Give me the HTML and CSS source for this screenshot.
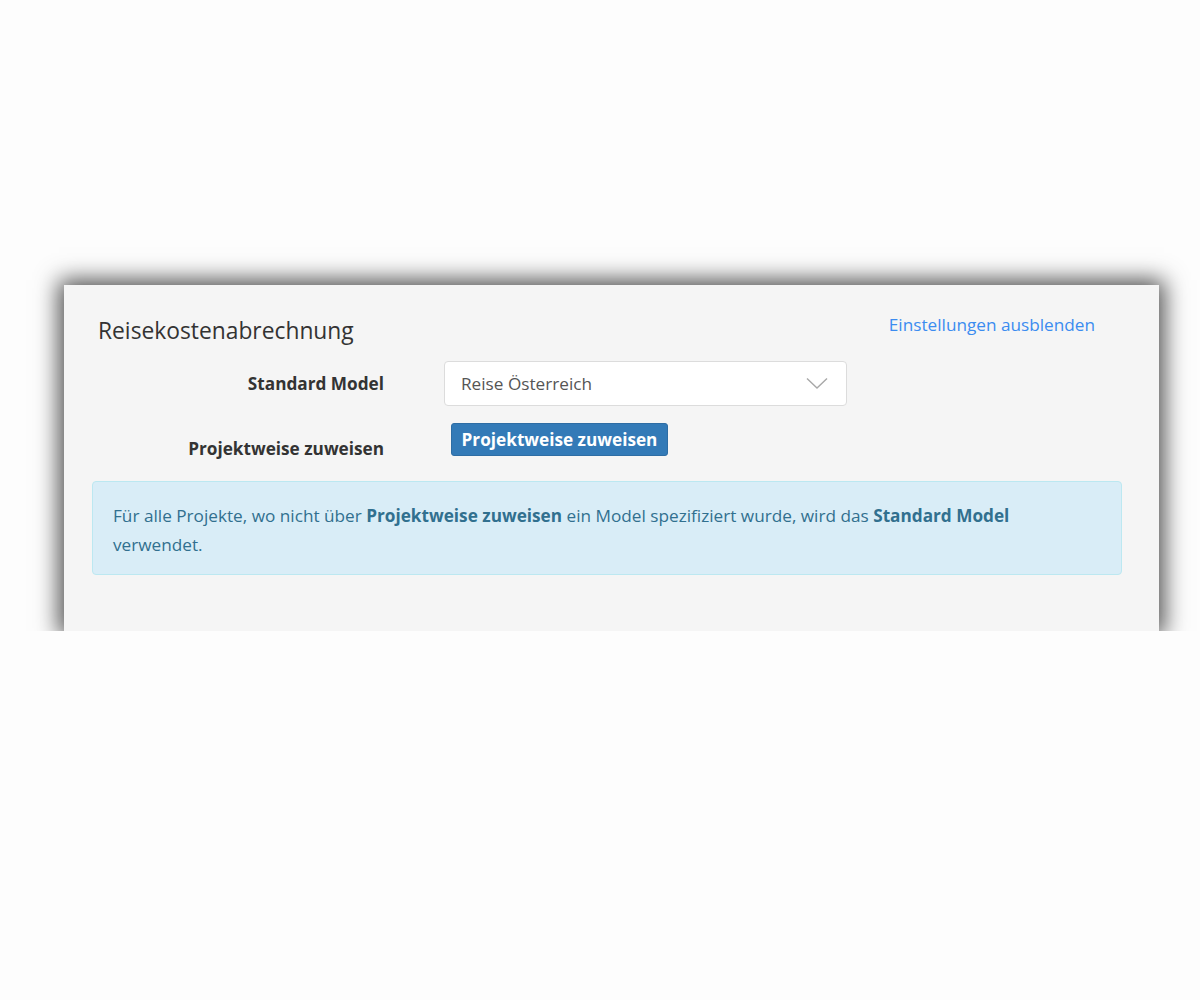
FILE: index.html
```html
<!DOCTYPE html>
<html lang="de">
  <head>
    <meta charset="UTF-8" />
    <meta name="viewport" content="width=device-width, initial-scale=1.0" />
    <title>Reisekostenabrechnung</title>
    <link rel="stylesheet" href="styles.css">
  </head>
  <body>
    <div class="panel">
      <div class="panel-head">
        <h2>Reisekostenabrechnung</h2>
        <a href="#" class="toggle">Einstellungen ausblenden</a>
      </div>
      <div class="form-row">
        <label class="form-label" for="modelSelect">Standard Model</label>
        <div class="select">
          <span>Reise Österreich</span>
          <svg width="22" height="13" viewBox="0 0 22 13">
            <polyline points="1,1.5 11,11 21,1.5" fill="none" stroke="#a8a8a8" stroke-width="1.4" />
          </svg>
        </div>
      </div>
      <div class="form-row top">
        <label class="form-label">Projektweise zuweisen</label>
        <button type="button" class="btn-primary">Projektweise zuweisen</button>
      </div>
      <div class="alert-info">
        Für alle Projekte, wo nicht über <b>Projektweise zuweisen</b> ein Model spezifiziert wurde, wird das <b>Standard Model</b> verwendet.
      </div>
    </div>
  </body>
</html>
```

FILE: styles.css
```css
* {
  box-sizing: border-box;
}
body {
  margin: 0;
  background-color: #fdfdfd;
  font-family: "Open Sans", "Noto Sans", sans-serif;
  font-size: 17.2px;
  color: #333;
}
.panel {
  width: 1095px;
  margin: 285px 0 0 64px;
  padding: 28px 37px 56px 28px;
  background: #f5f5f5;
  box-shadow: 0 0 22px 5px rgba(0, 0, 0, 0.7);
}
.panel-head {
  display: flex;
  justify-content: space-between;
  align-items: flex-start;
  height: 32px;
}
.panel-head h2 {
  margin: 3px 0 0 6px;
  font-size: 22.8px;
  font-weight: normal;
  line-height: 30px;
  color: #333;
}
.toggle {
  margin: 1px 27px 0 0;
  line-height: 22px;
  color: #3b8cf0;
  text-decoration: none;
}
.form-row {
  display: flex;
  align-items: center;
  margin-top: 16px;
}
.form-row.top {
  align-items: flex-start;
  margin-top: 17px;
}
.form-label {
  width: 292px;
  margin-right: 60px;
  text-align: right;
  font-weight: bold;
  line-height: 22px;
}
.form-row.top .form-label {
  padding-top: 15px;
}
.select {
  display: flex;
  justify-content: space-between;
  align-items: center;
  width: 403px;
  height: 45px;
  padding: 0 18px 0 16px;
  background: #fff;
  border: 1px solid #dcdcdc;
  border-radius: 4px;
  color: #555;
}
.btn-primary {
  width: 217px;
  height: 33px;
  margin-left: 7px;
  padding: 0;
  background-color: #337ab7;
  border: 1px solid #2e6da4;
  border-radius: 3px;
  color: white;
  font-family: inherit;
  font-size: 17.2px;
  font-weight: bold;
  cursor: pointer;
}
.alert-info {
  margin-top: 21px;
  padding: 19px 60px 15px 20px;
  background-color: #d9edf7;
  border: 1px solid #bce8f1;
  border-radius: 4px;
  color: #31708f;
  line-height: 29px;
}
```
